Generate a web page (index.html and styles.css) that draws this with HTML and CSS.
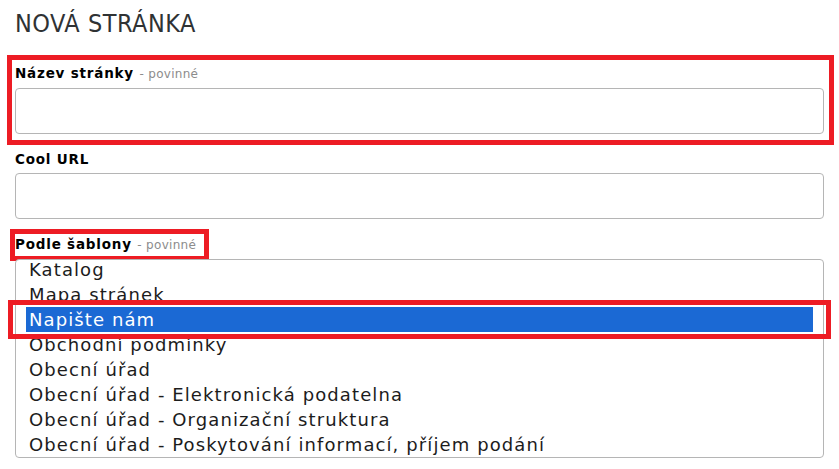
FILE: index.html
```html
<!DOCTYPE html>
<html lang="cs">
<head>
<meta charset="utf-8">
<title>Nová stránka</title>
<link rel="stylesheet" href="styles.css">
</head>
<body>
<div class="page">
  <h1 class="title">NOVÁ STRÁNKA</h1>

  <div class="field field-name">
    <label class="label">Název stránky <span class="req">- povinné</span></label>
    <div class="input"></div>
    <div class="mark mark-name"></div>
  </div>

  <div class="field">
    <label class="label">Cool URL</label>
    <div class="input"></div>
  </div>

  <div class="field field-tpl">
    <label class="label label-tpl">Podle šablony <span class="req">- povinné</span><span class="mark mark-label"></span></label>
    <div class="listbox">
      <ul class="options">
        <li class="option">Katalog</li>
        <li class="option">Mapa stránek</li>
        <li class="option selected">Napište nám</li>
        <li class="option">Obchodní podmínky</li>
        <li class="option">Obecní úřad</li>
        <li class="option">Obecní úřad - Elektronická podatelna</li>
        <li class="option">Obecní úřad - Organizační struktura</li>
        <li class="option">Obecní úřad - Poskytování informací, příjem podání</li>
      </ul>
      <div class="mark mark-option"></div>
    </div>
  </div>
</div>
</body>
</html>
```

FILE: styles.css
```css
* { box-sizing: border-box; }
html, body { margin: 0; padding: 0; background: #fff; }
body { font-family: "DejaVu Sans", Verdana, sans-serif; color: #111; }

.page {
  padding: 9px 15px 0 15px;
  width: 839px;
}

.title {
  margin: 0;
  font-family: "DejaVu Sans Condensed", "DejaVu Sans", sans-serif;
  font-weight: normal;
  font-size: 25px;
  line-height: 30px;
  letter-spacing: 0.5px;
  color: #2f3234;
}

.field { position: relative; }
.field-name { margin-top: 26px; }
.field + .field { margin-top: 17px; }

.label {
  display: block;
  position: relative;
  font-weight: bold;
  font-size: 13.5px;
  line-height: 17px;
  letter-spacing: 0.8px;
  margin-bottom: 5px;
  color: #000;
}
.label-tpl { width: max-content; }

.req {
  font-weight: normal;
  font-size: 12px;
  letter-spacing: 0.3px;
  color: #8c8c8c;
}

.input {
  width: 809px;
  height: 46px;
  border: 1px solid #b5b5b5;
  border-radius: 4px;
  background: #fff;
}

.listbox {
  position: relative;
  width: 809px;
  height: 199px;
  border: 1px solid #b5b5b5;
  border-radius: 4px;
  padding: 0 10px;
  background: #fff;
}
.options {
  list-style: none;
  margin: -3px 0 0 0;
  padding: 0;
  height: 198px;
  overflow: hidden;
}
.option {
  height: 25px;
  line-height: 25px;
  font-size: 18px;
  letter-spacing: 1.1px;
  padding-left: 3px;
  color: #1c1c1c;
  white-space: nowrap;
}
.option.selected {
  background: #1b69d4;
  color: #fff;
}

.mark {
  position: absolute;
  border: 5px solid #ed1c24;
  pointer-events: none;
}
.mark-name { left: -8px; right: -10px; top: -10px; bottom: -11px; }
.mark-label { left: -5px; top: -7px; right: -13px; height: 32px; }
.mark-option { left: -8px; top: 40px; width: 823px; height: 39px; }
```
